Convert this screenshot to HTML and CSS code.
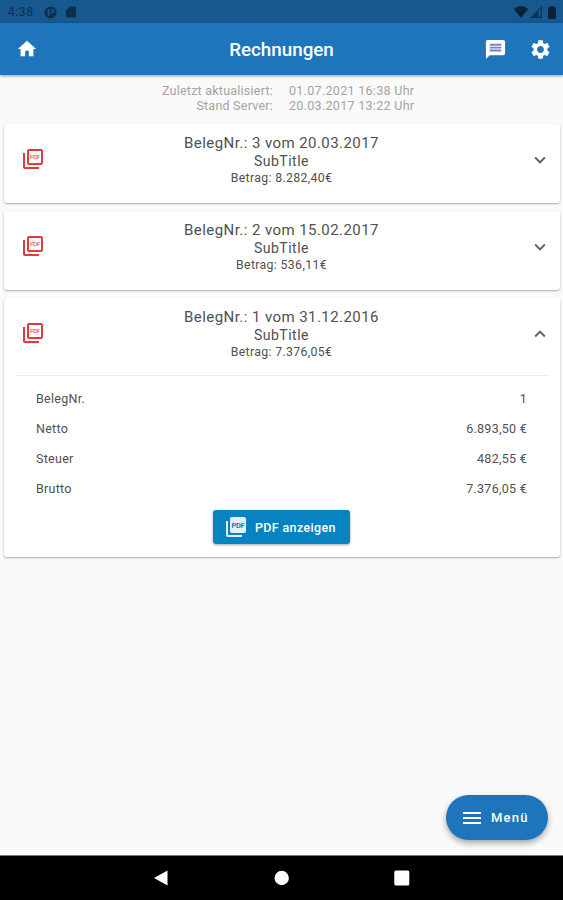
FILE: index.html
```
<!DOCTYPE html>
<html lang="de">

<head>
    <meta charset="UTF-8">
    <meta name="viewport" content="width=device-width, initial-scale=1.0">
    <title>Rechnungen</title>
    <link rel="stylesheet" href="styles.css">
</head>

<body>
    <!-- icons -->
    <svg class="defs" width="0" height="0">
        <symbol id="pdf" viewBox="0 0 24 24">
            <path d="M20 2H8c-1.1 0-2 .9-2 2v12c0 1.1.9 2 2 2h12c1.1 0 2-.9 2-2V4c0-1.1-.9-2-2-2zm0 14H8V4h12v12zM4 6H2v14c0 1.1.9 2 2 2h14v-2H4V6z" />
        </symbol>
        <symbol id="down" viewBox="0 0 24 24">
            <path d="M7.41 8.59L12 13.17l4.59-4.58L18 10l-6 6-6-6z" />
        </symbol>
        <symbol id="up" viewBox="0 0 24 24">
            <path d="M7.41 15.41L12 10.83l4.59 4.58L18 14l-6-6-6 6z" />
        </symbol>
    </svg>

    <div class="status">
        <span class="time">4:38</span>
        <svg class="s-app" viewBox="0 0 14 14">
            <path fill-rule="evenodd" d="M7 .5a6.5 6.5 0 1 0 0 13 6.5 6.5 0 0 0 0-13zM4 3.4h2.2v7.4A4.8 4.8 0 0 1 4 9.6zM7.4 3.2h1.2a2.3 2.3 0 0 1 0 4.7H7.4V6.3h1a.8.8 0 0 0 0-1.5h-1z" />
        </svg>
        <svg class="s-sd" viewBox="0 0 11 12">
            <path d="M4 0h5.500A1.400 1.400 0 0 1 11 1.400v9.200A1.400 1.400 0 0 1 9.600 12H1.400A1.400 1.400 0 0 1 0 10.600V4z" />
        </svg>
        <svg class="s-wifi" viewBox="0 0 14 12">
            <path d="M0 3.200C4-1 10-1 14 3.200L7 12z" />
        </svg>
        <svg class="s-signal" viewBox="0 0 12 12">
            <path d="M0 12L12 0v12zM8.500 5v5.800h2.300V2.800z" fill-rule="evenodd" />
        </svg>
        <svg class="s-bat" viewBox="0 0 8 13">
            <path d="M2.500 0h3v1.300H7a1 1 0 0 1 1 1V12a1 1 0 0 1-1 1H1a1 1 0 0 1-1-1V2.300a1 1 0 0 1 1-1h1.500z" />
        </svg>
    </div>

    <div class="header">
        <a href="javascript:;" class="home">
            <svg viewBox="0 0 24 24"><path d="M10 20v-6h4v6h5v-8h3L12 3 2 12h3v8z" /></svg>
        </a>
        <h1>Rechnungen</h1>
        <div class="actions">
            <a href="javascript:;">
                <svg viewBox="0 0 24 24">
                    <path d="M20 2H4c-1.100 0-2 .9-2 2v18l4-4h14c1.100 0 2-.9 2-2V4c0-1.100-.9-2-2-2z" />
                    <path class="lines" d="M6 6h12v2H6zM6 9h12v2H6zM6 12h12v2H6z" />
                </svg>
            </a>
            <a href="javascript:;">
                <svg viewBox="0 0 24 24"><path d="M19.140 12.940c.04-.3.060-.61.060-.94 0-.32-.020-.64-.070-.94l2.030-1.580c.18-.14.23-.41.12-.61l-1.920-3.320c-.12-.22-.37-.29-.59-.22l-2.390.96c-.5-.38-1.030-.7-1.620-.94l-.36-2.540c-.04-.24-.24-.41-.48-.41h-3.840c-.24 0-.43.17-.47.41l-.36 2.540c-.59.24-1.130.57-1.620.94l-2.390-.96c-.22-.08-.47 0-.59.22L2.740 8.870c-.12.21-.08.47.12.61l2.030 1.580c-.05.3-.09.63-.09.94s.02.64.07.94l-2.030 1.580c-.18.14-.23.41-.12.61l1.920 3.320c.12.22.37.29.59.22l2.390-.96c.5.38 1.030.7 1.620.94l.36 2.540c.05.24.24.41.48.41h3.840c.24 0 .44-.17.47-.41l.36-2.540c.59-.24 1.130-.56 1.620-.94l2.390.96c.22.08.47 0 .59-.22l1.920-3.320c.12-.22.07-.47-.12-.61l-2.010-1.580zM12 15.600c-1.980 0-3.600-1.620-3.600-3.600s1.620-3.600 3.600-3.600 3.600 1.620 3.600 3.600-1.620 3.600-3.600 3.600z" /></svg>
            </a>
        </div>
    </div>

    <div class="main">
        <div class="updated">
            <span class="label">Zuletzt aktualisiert:</span>
            <span>01.07.2021 16:38 Uhr</span>
            <span class="label">Stand Server:</span>
            <span>20.03.2017 13:22 Uhr</span>
        </div>

        <div class="card">
            <div class="card-head">
                <svg class="pdf" viewBox="0 0 24 24"><use href="#pdf" /><text x="14" y="12.200" textLength="10">PDF</text></svg>
                <div class="info">
                    <p class="title">BelegNr.: 3 vom 20.03.2017</p>
                    <p class="sub">SubTitle</p>
                    <p class="sum">Betrag: 8.282,40€</p>
                </div>
                <svg class="arrow"><use href="#down" /></svg>
            </div>
        </div>

        <div class="card">
            <div class="card-head">
                <svg class="pdf" viewBox="0 0 24 24"><use href="#pdf" /><text x="14" y="12.200" textLength="10">PDF</text></svg>
                <div class="info">
                    <p class="title">BelegNr.: 2 vom 15.02.2017</p>
                    <p class="sub">SubTitle</p>
                    <p class="sum">Betrag: 536,11€</p>
                </div>
                <svg class="arrow"><use href="#down" /></svg>
            </div>
        </div>

        <div class="card open">
            <div class="card-head">
                <svg class="pdf" viewBox="0 0 24 24"><use href="#pdf" /><text x="14" y="12.200" textLength="10">PDF</text></svg>
                <div class="info">
                    <p class="title">BelegNr.: 1 vom 31.12.2016</p>
                    <p class="sub">SubTitle</p>
                    <p class="sum">Betrag: 7.376,05€</p>
                </div>
                <svg class="arrow"><use href="#up" /></svg>
            </div>
            <ul class="detail">
                <li><span>BelegNr.</span><span>1</span></li>
                <li><span>Netto</span><span>6.893,50 €</span></li>
                <li><span>Steuer</span><span>482,55 €</span></li>
                <li><span>Brutto</span><span>7.376,05 €</span></li>
            </ul>
            <a href="javascript:;" class="btn">
                <svg viewBox="0 0 24 24">
                    <path d="M20 2H8c-1.100 0-2 .9-2 2v12c0 1.100.9 2 2 2h12c1.100 0 2-.9 2-2V4c0-1.100-.9-2-2-2zM4 6H2v14c0 1.100.9 2 2 2h14v-2H4V6z" />
                    <text x="14" y="12.500" textLength="13">PDF</text>
                </svg>
                <span>PDF anzeigen</span>
            </a>
        </div>
    </div>

    <a href="javascript:;" class="menu">
        <svg viewBox="0 0 18 12"><path d="M0 0h18v2H0zM0 5h18v2H0zM0 10h18v2H0z" /></svg>
        <span>Menü</span>
    </a>

    <div class="nav">
        <svg viewBox="0 0 16 16"><path d="M0 8L13.500.5v15z" /></svg>
        <svg viewBox="0 0 16 16"><circle cx="7.700" cy="8" r="7.200" /></svg>
        <svg viewBox="0 0 16 16"><rect x=".3" y=".5" width="15" height="15" rx="1.500" /></svg>
    </div>
</body>

</html>
```
FILE: styles.css
```
* {
    margin: 0;
    padding: 0;
    box-sizing: border-box;
}

body {
    position: relative;
    display: flex;
    flex-direction: column;
    height: 900px;
    overflow: hidden;
    background-color: #fafafa;
    color: #505050;
    font-family: Roboto, "Liberation Sans", sans-serif;
    white-space: nowrap;
}

a {
    color: inherit;
    text-decoration: none;
}

li {
    list-style: none;
}

svg {
    display: block;
    flex: none;
    fill: currentColor;
}

svg text {
    text-anchor: middle;
}

.defs {
    position: absolute;
}

/* status bar */
.status {
    display: flex;
    align-items: center;
    height: 23px;
    padding: 1px 7px 0 8px;
    background-color: #17598f;
    color: #0b3050;
}

.time {
    width: 36px;
    font-size: 12px;
    letter-spacing: 0.6px;
}

.s-app {
    width: 13px;
    height: 13px;
}

.s-sd {
    width: 10px;
    height: 12px;
    margin-left: 9px;
}

.s-wifi {
    width: 14px;
    height: 12px;
    margin-left: auto;
    color: #0a2237;
}

.s-signal {
    width: 12px;
    height: 12px;
    margin-left: 2px;
}

.s-bat {
    width: 8px;
    height: 13px;
    margin-left: 6px;
    color: #0a2237;
}

/* header */
.header {
    display: grid;
    grid-template-columns: 1fr auto 1fr;
    align-items: center;
    height: 52px;
    padding: 0 11px 0 16px;
    background-color: #1e75bc;
    color: #fff;
    box-shadow: 0 1px 3px rgba(0, 0, 0, 0.4);
}

.header h1 {
    padding: 2px 5px 0 0;
    font-size: 18.8px;
    font-weight: 500;
    line-height: 24px;
}

.home svg {
    width: 22px;
    height: 22px;
}

.actions {
    display: flex;
    justify-content: flex-end;
    gap: 22px;
}

.actions svg {
    width: 23px;
    height: 23px;
}

.lines {
    fill: #7486c6;
}

/* list */
.main {
    flex: 1;
    padding: 8px 3px 0 4px;
}

.updated {
    display: grid;
    grid-template-columns: 269px 1fr;
    column-gap: 16px;
    height: 41px;
    font-size: 12.5px;
    line-height: 15px;
    letter-spacing: 0.3px;
    align-content: start;
    color: #a3a3a3;
}

.updated .label {
    text-align: right;
    letter-spacing: 0.23px;
}

.card {
    height: 79px;
    margin-bottom: 8px;
    background-color: #fff;
    border-radius: 3px;
    box-shadow: 0 1px 2px rgba(0, 0, 0, 0.32);
}

.card.open {
    height: 259px;
}

.card-head {
    display: flex;
    height: 77px;
    padding: 10px 9px 0 17px;
}

.pdf {
    width: 24px;
    height: 24px;
    margin-top: 13px;
    color: #e03a3a;
}

.pdf text {
    font-size: 6px;
}

.arrow {
    width: 22px;
    height: 22px;
    margin-top: 15px;
    color: #606060;
}

.info {
    flex: 1;
    padding-right: 11px;
    text-align: center;
}

.title {
    font-size: 15px;
    line-height: 19px;
    letter-spacing: 0.43px;
}

.sub {
    font-size: 14px;
    line-height: 17px;
    letter-spacing: 0.5px;
}

.sum {
    font-size: 12.3px;
    line-height: 17px;
    letter-spacing: 0.35px;
}

.detail {
    margin: 0 12px;
    padding: 8px 21px 0 20px;
    border-top: 1px solid #ececec;
}

.detail li {
    display: flex;
    justify-content: space-between;
    font-size: 12.5px;
    line-height: 30px;
    letter-spacing: 0.28px;
}

.btn {
    display: flex;
    align-items: center;
    gap: 7px;
    width: 137px;
    height: 34px;
    margin: 6px 0 0 209px;
    padding-left: 11px;
    background-color: #0783c1;
    border-radius: 3px;
    box-shadow: 0 1px 3px rgba(0, 0, 0, 0.35);
    color: #fff;
    font-size: 12.5px;
    font-weight: 500;
    letter-spacing: 0.35px;
}

.btn svg {
    width: 24px;
    height: 24px;
    color: #e3f1fb;
}

.btn text {
    fill: #0783c1;
    font-size: 7.5px;
    font-weight: 700;
    letter-spacing: 0;
}

/* floating menu button */
.menu {
    position: absolute;
    right: 15px;
    bottom: 60px;
    display: flex;
    align-items: center;
    gap: 10px;
    width: 102px;
    height: 45px;
    padding-left: 17px;
    background-color: #1e75bc;
    border-radius: 23px;
    box-shadow: 0 3px 6px rgba(0, 0, 0, 0.35);
    color: #fff;
    font-size: 13px;
    font-weight: 500;
    letter-spacing: 1.2px;
}

.menu svg {
    width: 18px;
    height: 12px;
}

/* android navigation */
.nav {
    display: flex;
    justify-content: center;
    align-items: center;
    gap: 104px;
    height: 45px;
    border-top: 1px solid #777;
    background-color: #000;
    color: #fff;
}

.nav svg {
    width: 16px;
    height: 16px;
}
```
